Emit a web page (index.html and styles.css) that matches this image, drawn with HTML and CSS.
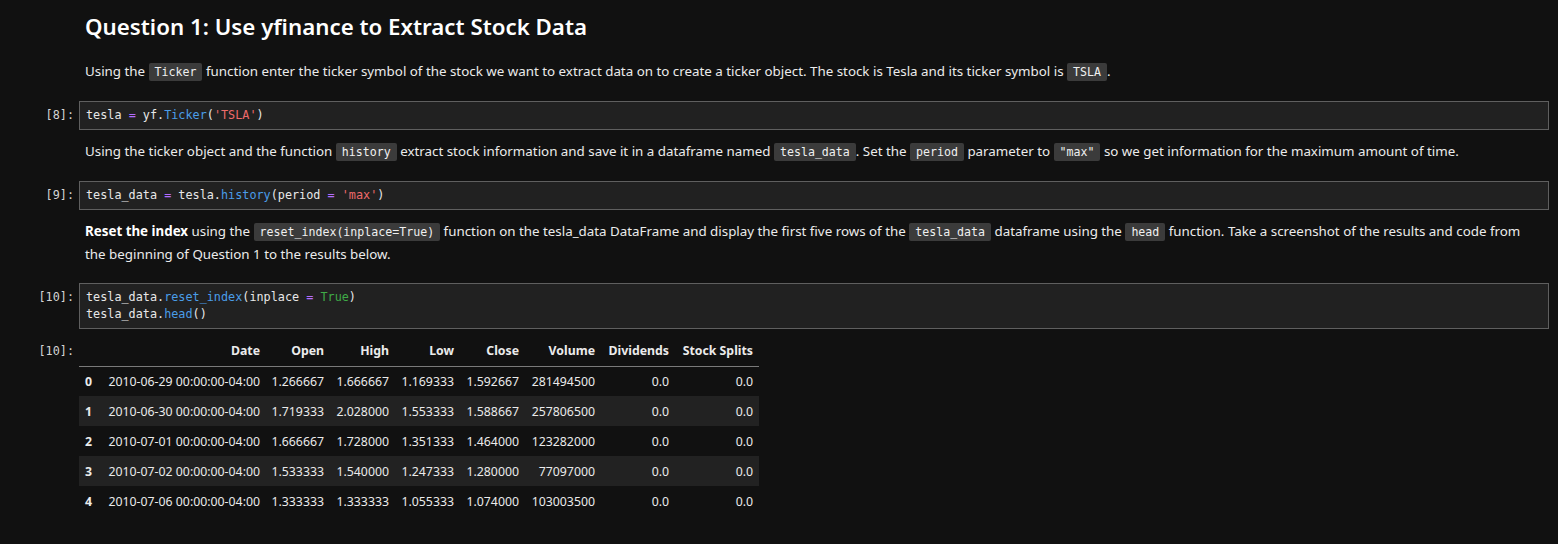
FILE: index.html
```html
<!DOCTYPE html>
<html lang="en">
<head>
<meta charset="utf-8">
<title>Question 1: Use yfinance to Extract Stock Data</title>
<link rel="stylesheet" href="styles.css">
</head>
<body>
<main class="notebook">
  <section class="cell md first">
    <div class="prompt"></div>
    <div class="content">
      <h2 class="title">Question 1: Use yfinance to Extract Stock Data</h2>
      <p>Using the <code>Ticker</code> function enter the ticker symbol of the stock we want to extract data on to create a ticker object. The stock is Tesla and its ticker symbol is <code>TSLA</code>.</p>
    </div>
  </section>

  <section class="cell code-cell">
    <div class="prompt">[8]:</div>
    <pre class="editor">tesla <span class="op">=</span> yf.<span class="fn">Ticker</span>(<span class="str">'TSLA'</span>)</pre>
  </section>

  <section class="cell md">
    <div class="prompt"></div>
    <div class="content">
      <p>Using the ticker object and the function <code>history</code> extract stock information and save it in a dataframe named <code>tesla_data</code>. Set the <code>period</code> parameter to <code>"max"</code> so we get information for the maximum amount of time.</p>
    </div>
  </section>

  <section class="cell code-cell">
    <div class="prompt">[9]:</div>
    <pre class="editor">tesla_data <span class="op">=</span> tesla.<span class="fn">history</span>(period <span class="op">=</span> <span class="str">'max'</span>)</pre>
  </section>

  <section class="cell md">
    <div class="prompt"></div>
    <div class="content">
      <p><strong>Reset the index</strong> using the <code>reset_index(inplace=True)</code> function on the tesla_data DataFrame and display the first five rows of the <code>tesla_data</code> dataframe using the <code>head</code> function. Take a screenshot of the results and code from the beginning of Question 1 to the results below.</p>
    </div>
  </section>

  <section class="cell code-cell">
    <div class="prompt">[10]:</div>
    <pre class="editor">tesla_data.<span class="fn">reset_index</span>(inplace <span class="op">=</span> <span class="kw">True</span>)
tesla_data.<span class="fn">head</span>()</pre>
  </section>

  <section class="cell output">
    <div class="prompt out">[10]:</div>
    <div class="output-area">
      <table class="dataframe">
        <thead>
          <tr><th></th><th>Date</th><th>Open</th><th>High</th><th>Low</th><th>Close</th><th>Volume</th><th>Dividends</th><th>Stock Splits</th></tr>
        </thead>
        <tbody>
          <tr><th>0</th><td>2010-06-29 00:00:00-04:00</td><td>1.266667</td><td>1.666667</td><td>1.169333</td><td>1.592667</td><td>281494500</td><td>0.0</td><td>0.0</td></tr>
          <tr><th>1</th><td>2010-06-30 00:00:00-04:00</td><td>1.719333</td><td>2.028000</td><td>1.553333</td><td>1.588667</td><td>257806500</td><td>0.0</td><td>0.0</td></tr>
          <tr><th>2</th><td>2010-07-01 00:00:00-04:00</td><td>1.666667</td><td>1.728000</td><td>1.351333</td><td>1.464000</td><td>123282000</td><td>0.0</td><td>0.0</td></tr>
          <tr><th>3</th><td>2010-07-02 00:00:00-04:00</td><td>1.533333</td><td>1.540000</td><td>1.247333</td><td>1.280000</td><td>77097000</td><td>0.0</td><td>0.0</td></tr>
          <tr><th>4</th><td>2010-07-06 00:00:00-04:00</td><td>1.333333</td><td>1.333333</td><td>1.055333</td><td>1.074000</td><td>103003500</td><td>0.0</td><td>0.0</td></tr>
        </tbody>
      </table>
    </div>
  </section>
</main>
</body>
</html>
```

FILE: styles.css
```css
html, body {
  margin: 0;
  padding: 0;
  background: #111111;
}

body {
  color: #ebebeb;
  font-family: "Noto Sans", "Open Sans", sans-serif;
  font-size: 13.35px;
  width: 1558px;
  height: 544px;
  overflow: hidden;
}

.notebook {
  display: flex;
  flex-direction: column;
  padding: 12px 9px 0 0;
}

.cell {
  display: grid;
  grid-template-columns: 79px 1fr;
}

.prompt {
  box-sizing: border-box;
  padding: 6px 5px 0 0;
  text-align: right;
  font-family: "DejaVu Sans Mono", "Liberation Mono", monospace;
  font-size: 11.8px;
  line-height: 17px;
  color: #d4d4d4;
}

.content {
  padding: 0 6px;
}

.title {
  margin: 0;
  font-size: 22.3px;
  line-height: 30px;
  font-weight: 600;
  color: #ffffff;
}

.content p {
  margin: 0;
  line-height: 22px;
}

.first p {
  margin-top: 18px;
}

.md {
  margin-top: 10px;
}

.md.first {
  margin-top: 0;
}

.code-cell {
  margin-top: 18px;
}

code {
  font-family: "DejaVu Sans Mono", "Liberation Mono", monospace;
  font-size: 11.6px;
  background: #3b3b3b;
  color: #f0f0f0;
  padding: 2px 6px;
  border-radius: 2px;
}

strong {
  font-weight: 700;
  color: #ffffff;
}

.editor {
  margin: 0;
  background: #212121;
  border: 1px solid #5f5f5f;
  padding: 5px 6px;
  font-family: "DejaVu Sans Mono", "Liberation Mono", monospace;
  font-size: 11.8px;
  line-height: 17px;
  color: #e8e8e8;
  white-space: pre;
}

.op { color: #b36cff; }
.fn { color: #4a9de8; }
.str { color: #ef6a6a; }
.kw { color: #3faa47; }

.output {
  margin-top: 7px;
}

.prompt.out {
  padding-top: 7px;
}

.dataframe {
  border-collapse: collapse;
  table-layout: fixed;
  width: 680px;
  font-size: 12.3px;
  color: #ebebeb;
}

.dataframe th,
.dataframe td {
  height: 30px;
  padding: 0 6px 0 0;
  text-align: right;
  white-space: nowrap;
  box-sizing: border-box;
}

.dataframe th {
  font-weight: 700;
}

.dataframe thead th {
  border-bottom: 1px solid #7a7a7a;
}

.dataframe tbody tr:nth-child(even) {
  background: #222222;
}

.dataframe th:nth-child(1), .dataframe td:nth-child(1) { width: 19px; }
.dataframe th:nth-child(2), .dataframe td:nth-child(2) { width: 168px; }
.dataframe th:nth-child(3), .dataframe td:nth-child(3) { width: 64px; }
.dataframe th:nth-child(4), .dataframe td:nth-child(4) { width: 65px; }
.dataframe th:nth-child(5), .dataframe td:nth-child(5) { width: 65px; }
.dataframe th:nth-child(6), .dataframe td:nth-child(6) { width: 65px; }
.dataframe th:nth-child(7), .dataframe td:nth-child(7) { width: 76px; }
.dataframe th:nth-child(8), .dataframe td:nth-child(8) { width: 74px; }
.dataframe th:nth-child(9), .dataframe td:nth-child(9) { width: 84px; }
```
